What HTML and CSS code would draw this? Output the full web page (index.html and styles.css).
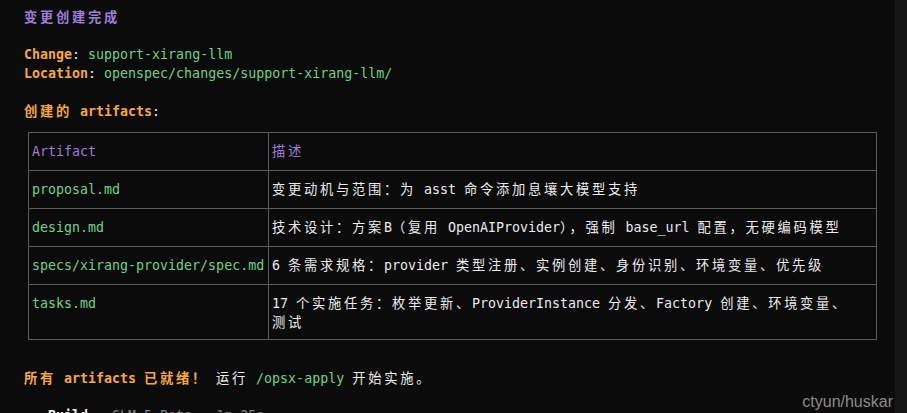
FILE: index.html
```html
<!DOCTYPE html>
<html lang="zh-CN">
<head>
<meta charset="utf-8">
<title>变更创建完成</title>
<link rel="stylesheet" href="styles.css">
</head>
<body>
<main class="term">
  <div class="line head b"><span class="c">变更创建完成</span></div>
  <div class="line"></div>
  <div class="line"><span class="strong">Change</span>: <span class="code">support-xirang-llm</span></div>
  <div class="line"><span class="strong">Location</span>: <span class="code">openspec/changes/support-xirang-llm/</span></div>
  <div class="line"></div>
  <div class="line"><span class="strong"><span class="c">创建的</span> artifacts</span>:</div>

  <div class="tbl">
    <div class="cell left head">Artifact</div>
    <div class="cell head"><span class="c">描述</span></div>

    <div class="cell left code">proposal.md</div>
    <div class="cell"><span class="c">变更动机与范围：为</span> asst <span class="c">命令添加息壤大模型支持</span></div>

    <div class="cell left code">design.md</div>
    <div class="cell"><span class="c">技术设计：方案</span>B<span class="c">（复用</span> OpenAIProvider<span class="c">），强制</span> base_url <span class="c">配置，无硬编码模型</span></div>

    <div class="cell left code">specs/xirang-provider/spec.md</div>
    <div class="cell">6 <span class="c">条需求规格：</span>provider <span class="c">类型注册、实例创建、身份识别、环境变量、优先级</span></div>

    <div class="cell left code last">tasks.md</div>
    <div class="cell last">17 <span class="c">个实施任务：枚举更新、</span>ProviderInstance <span class="c">分发、</span>Factory <span class="c">创建、环境变量、</span><br><span class="c">测试</span></div>
  </div>

  <div class="line done"><span class="strong"><span class="c">所有</span> artifacts <span class="c">已就绪！</span></span> <span class="c">运行</span> <span class="code">/opsx-apply</span> <span class="c">开始实施。</span></div>
  <div class="line"></div>
  <div class="line status"><span class="bw">Build</span> <span class="dim">· GLM-5 Beta · 1m 25s</span></div>
</main>
<aside class="scrollbar"></aside>
<div class="watermark">ctyun/huskar</div>
</body>
</html>
```

FILE: styles.css
```css
html, body {
  margin: 0;
  padding: 0;
}

body {
  width: 907px;
  height: 413px;
  overflow: hidden;
  background: #0b0b0b;
  display: flex;
  position: relative;
}

.term {
  flex: 1;
  min-width: 0;
  padding: 8.6px 0 0 24px;
  font-family: "DejaVu Sans Mono", "Noto Sans CJK SC", monospace;
  font-size: 13.3px;
  line-height: 18.8px;
  color: #ececec;
}

.line {
  height: 18.8px;
  white-space: pre;
}

.c {
  font-family: "Noto Sans CJK SC", sans-serif;
  font-size: 13.3px;
  line-height: 10px;
  letter-spacing: 2.7px;
}

.head {
  color: #9d7cd8;
}

.b {
  font-weight: bold;
}

.strong {
  color: #f5a742;
  font-weight: bold;
}

.code {
  color: #6fd28a;
}

.tbl {
  display: grid;
  grid-template-columns: 240px 607px;
  width: max-content;
  margin: 10.6px 0 0 4px;
  border: 1px solid #5c5c5c;
}

.cell {
  padding: 9px 3px;
  line-height: 19px;
  border-bottom: 1px solid #5c5c5c;
  white-space: pre;
}

.cell.left {
  border-right: 1px solid #5c5c5c;
}

.cell.last {
  border-bottom: none;
  padding-bottom: 7px;
}

.done {
  margin-top: 29.6px;
}

.status {
  padding-left: 24px;
}

.bw {
  color: #f0f0f0;
  font-weight: bold;
}

.dim {
  color: #808080;
}

.scrollbar {
  width: 12px;
  flex: none;
  background: #161616;
}

.watermark {
  position: absolute;
  top: 392px;
  right: 14px;
  font-family: "Liberation Sans", Arial, sans-serif;
  font-size: 16px;
  line-height: 20px;
  color: #8a8a8a;
}
```
